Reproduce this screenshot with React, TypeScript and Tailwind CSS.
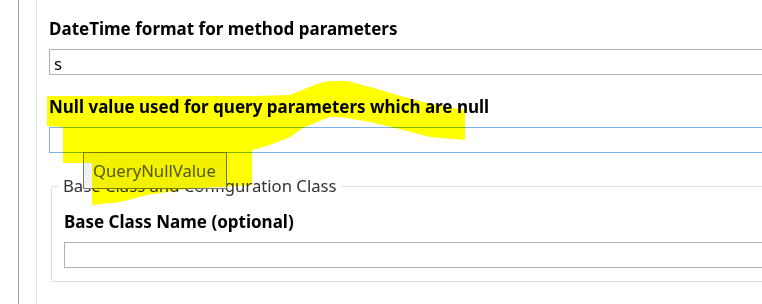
import React from 'react';

const highlight =
  '47,96 150,96 250,96 290,95 307,88 320,83 330,81 347,81 370,87 397,95 423,102 447,107 465,110 465,140 430,137 403,130 370,122 340,117 330,117 317,122 303,128 290,137 270,145 252,150 252,185 187,189 147,195 120,202 92,205 92,163 63,163 63,127 47,126';

function Field({ value, className = '' }: { value?: string; className?: string }) {
  return (
    <div
      className={`h-[26px] w-[760px] border bg-white pl-[4px] text-[17px] leading-[28px] text-black ${className}`}
    >
      {value}
    </div>
  );
}

export default function App() {
  return (
    <div className="relative w-[762px] h-[304px] overflow-hidden bg-white font-['Noto_Sans',sans-serif]">
      <div className="flex h-full">
        <div className="w-[19px] h-full shrink-0 border-r border-[#a3a3a3]" />
        <div className="w-[18px] h-full shrink-0 border-r border-[#dfe4ea]" />

        {/* settings form */}
        <div className="pt-[19px] pl-[12px] shrink-0">
          <div className="text-[17px] leading-[20px] font-bold text-black">
            DateTime format for method parameters
          </div>
          <Field value="s" className="mt-[10px] border-[#b1b1b1]" />

          <div className="mt-[22px] text-[17px] leading-[20px] font-bold text-black">
            Null value used for query parameters which are null
          </div>
          <Field className="mt-[10px] border-[#7db2e8]" />

          <fieldset className="mt-[23px] ml-[2px] w-[800px] border border-[#d5dfe5] rounded-[3px] pl-[12px] pb-[13px]">
            <legend className="-ml-[6px] px-[5px] text-[16.7px] leading-[20px] text-[#333333]">
              Base Class and Configuration Class
            </legend>
            <div className="mt-[16px] text-[17px] leading-[20px] font-bold text-black">
              Base Class Name (optional)
            </div>
            <Field className="mt-[10px] border-[#b1b1b1]" />
          </fieldset>
        </div>
      </div>

      {/* tooltip */}
      <div className="absolute left-[83px] top-[152px] w-[144px] h-[37px] border border-[#7a7a7a] bg-[#f1f1f1] pl-[9px] text-[16.7px] leading-[35px] text-[#575757]">
        QueryNullValue
      </div>

      {/* highlighter scribble */}
      <svg className="absolute inset-0 mix-blend-multiply pointer-events-none" width="762" height="304">
        <polygon points={highlight} fill="#ffff00" />
      </svg>
    </div>
  );
}
